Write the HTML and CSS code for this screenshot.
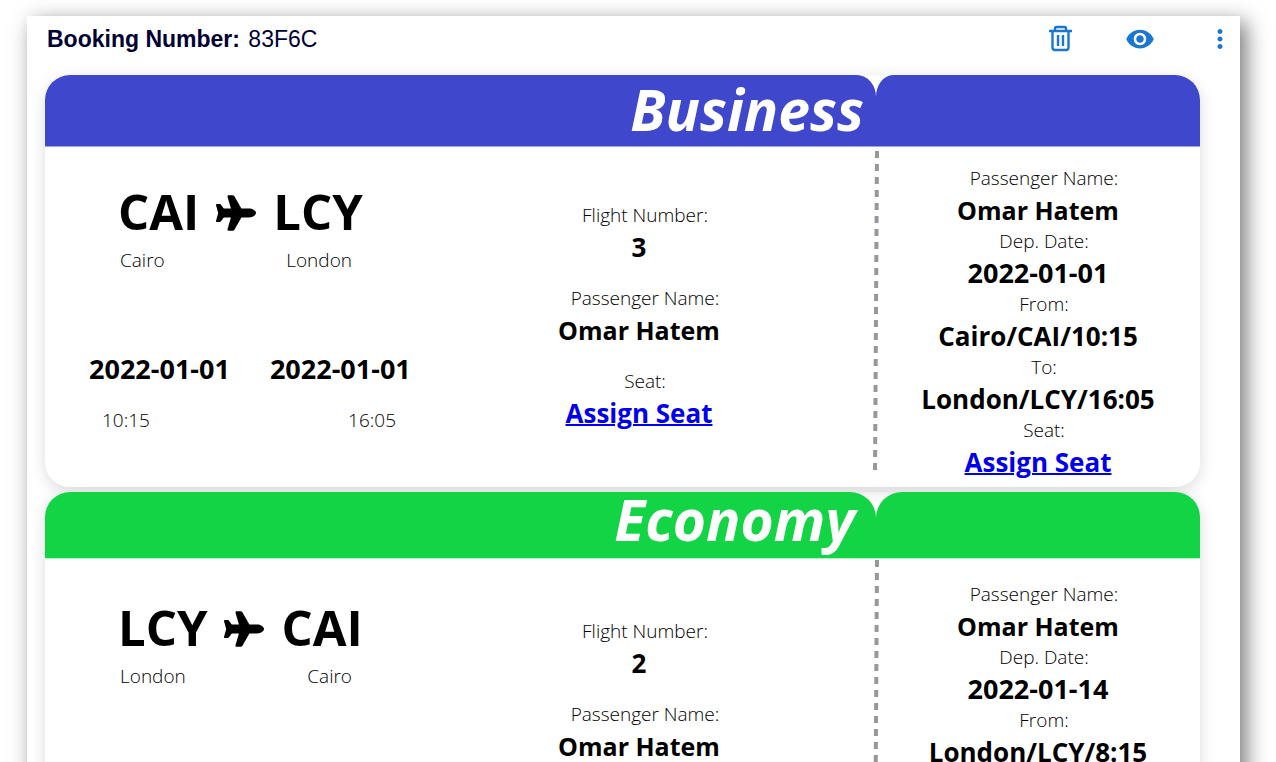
FILE: index.html
```html
<!DOCTYPE html>
<html lang="en">
<head>
<meta charset="utf-8">
<title>Booking 83F6C</title>
<link rel="stylesheet" href="styles.css">
</head>
<body>
<svg class="symbols" aria-hidden="true">
  <symbol id="plane" viewBox="0 0 576 512"><path d="M482.3 192c34.2 0 93.7 29 93.7 64c0 36-59.5 64-93.7 64l-116.6 0L265.2 495.9c-5.7 10-16.3 16.1-27.8 16.1l-56.2 0c-10.6 0-18.3-10.2-15.4-20.4l49-171.6L112 320 68.8 377.6c-3 4-7.8 6.4-12.8 6.4l-42 0c-7.8 0-14-6.3-14-14c0-1.3 .2-2.6 .5-3.9L32 256 .5 145.9c-.4-1.3-.5-2.6-.5-3.9c0-7.8 6.3-14 14-14l42 0c5 0 9.8 2.4 12.8 6.4L112 192l102.9 0-49-171.6C162.9 10.2 170.6 0 181.2 0l56.2 0c11.5 0 22.1 6.2 27.8 16.1L365.7 192l116.6 0z"/></symbol>
</svg>
<main class="booking">
  <header class="booking-bar">
    <h1 class="booking-title">Booking Number: <span class="booking-code">83F6C</span></h1>
    <div class="actions">
      <button class="action" type="button" aria-label="Delete booking">
        <svg class="icon" viewBox="0 0 30 30" fill="none" stroke="currentColor" stroke-width="2.400"><path d="M4 7h23M10 7V4.500Q10 3 11.500 3h8Q21 3 21 4.500V7M7.500 7v16.500q0 2.500 2.500 2.500h11q2.500 0 2.500-2.500V7M13 11v11M18 11v11"/></svg>
      </button>
      <button class="action" type="button" aria-label="View booking">
        <svg class="icon" viewBox="0 0 24 24" fill="currentColor"><path d="M12 4.500C7 4.500 2.730 7.610 1 12c1.730 4.390 6 7.500 11 7.500s9.270-3.110 11-7.500c-1.730-4.390-6-7.500-11-7.500zM12 17c-2.760 0-5-2.240-5-5s2.240-5 5-5 5 2.240 5 5-2.240 5-5 5zm0-8c-1.660 0-3 1.340-3 3s1.340 3 3 3 3-1.340 3-3-1.340-3-3-3z"/></svg>
      </button>
      <button class="action" type="button" aria-label="More options">
        <svg class="icon" viewBox="0 0 24 24" fill="currentColor"><path d="M12 8c1.100 0 2-.9 2-2s-.9-2-2-2-2 .9-2 2 .9 2 2 2zm0 2c-1.100 0-2 .9-2 2s.9 2 2 2 2-.9 2-2-.9-2-2-2zm0 6c-1.100 0-2 .9-2 2s.9 2 2 2 2-.9 2-2-.9-2-2-2z"/></svg>
      </button>
    </div>
  </header>

  <article class="ticket business">
    <div class="band">
      <h2 class="band-main">Business</h2>
      <div class="band-stub"></div>
    </div>
    <div class="ticket-body">
      <section class="journey">
        <div class="route"><span>CAI</span><svg class="plane"><use href="#plane"/></svg><span>LCY</span></div>
        <div class="cities"><span>Cairo</span><span>London</span></div>
        <div class="dates"><span>2022-01-01</span><span>2022-01-01</span></div>
        <div class="times"><span>10:15</span><span>16:05</span></div>
      </section>
      <dl class="details">
        <div class="pair"><dt>Flight Number:</dt><dd>3</dd></div>
        <div class="pair"><dt>Passenger Name:</dt><dd class="name">Omar Hatem</dd></div>
        <div class="pair"><dt>Seat:</dt><dd><a href="#">Assign Seat</a></dd></div>
      </dl>
      <svg class="tear" aria-hidden="true"><line x1="9" y1="4" x2="7" y2="96%"/></svg>
      <dl class="stub">
        <div class="pair"><dt>Passenger Name:</dt><dd class="name">Omar Hatem</dd></div>
        <div class="pair"><dt>Dep. Date:</dt><dd class="date">2022-01-01</dd></div>
        <div class="pair"><dt>From:</dt><dd>Cairo/CAI/10:15</dd></div>
        <div class="pair"><dt>To:</dt><dd>London/LCY/16:05</dd></div>
        <div class="pair"><dt>Seat:</dt><dd><a href="#">Assign Seat</a></dd></div>
      </dl>
    </div>
  </article>

  <article class="ticket economy">
    <div class="band">
      <h2 class="band-main">Economy</h2>
      <div class="band-stub"></div>
    </div>
    <div class="ticket-body">
      <section class="journey">
        <div class="route"><span>LCY</span><svg class="plane"><use href="#plane"/></svg><span>CAI</span></div>
        <div class="cities"><span>London</span><span>Cairo</span></div>
      </section>
      <dl class="details">
        <div class="pair"><dt>Flight Number:</dt><dd>2</dd></div>
        <div class="pair"><dt>Passenger Name:</dt><dd class="name">Omar Hatem</dd></div>
      </dl>
      <svg class="tear" aria-hidden="true"><line x1="9" y1="-3" x2="7" y2="97%"/></svg>
      <dl class="stub">
        <div class="pair"><dt>Passenger Name:</dt><dd class="name">Omar Hatem</dd></div>
        <div class="pair"><dt>Dep. Date:</dt><dd class="date">2022-01-14</dd></div>
        <div class="pair"><dt>From:</dt><dd>London/LCY/8:15</dd></div>
      </dl>
    </div>
  </article>
</main>
</body>
</html>
```
FILE: styles.css
```css
* { box-sizing: border-box; }
body { margin: 0; background: #fff; color: #000; font-family: "Segoe UI", "Open Sans", sans-serif; }
h1, h2, dl, dd { margin: 0; }
.symbols { display: none; }

.booking { margin: 16px 36px 16px 27px; padding: 0 40px 16px 18px; background: #fff; box-shadow: 6px 6px 20px #777; }
.booking-bar { display: flex; align-items: center; justify-content: space-between; height: 59px; padding-bottom: 14px; margin-right: -35px; }
.booking-title { padding-left: 2px; color: #000033; font: bold 23px/28px "Liberation Sans", Arial, sans-serif; }
.booking-code { padding-left: 2px; font-weight: 400; }
.actions { display: flex; gap: 50px; }
.action { display: flex; padding: 0; border: 0; background: none; color: #1976d2; cursor: pointer; }
.icon { width: 30px; height: 30px; }

.ticket { margin-bottom: 5px; border-radius: 25px; box-shadow: 0 4px 16px rgba(0, 0, 0, .14); }
.band, .ticket-body { display: grid; grid-template-columns: minmax(0, 831fr) minmax(0, 324fr); }
.band { height: 72px; color: #fff; }
.band-main { padding-right: 12px; text-align: right; font-size: 57px; font-style: italic; font-weight: 700; line-height: 68px; }
.business .band > * { background: #3f48cc; border-bottom: 1px solid #a0a5e6; }
.business .band-main { border-radius: 25px 19px 0 0 / 25px 22px 0 0; }
.business .band-stub { border-radius: 17px 25px 0 0 / 22px 25px 0 0; }
.economy .band { height: 67px; }
.economy .band > * { background: #12d445; border-bottom: 1px solid #b5f0c5; }
.economy .band-main { padding-right: 21px; border-radius: 25px 26px 0 0; line-height: 54px; }
.economy .band-stub { border-radius: 26px 25px 0 0; }

.ticket-body { grid-template-columns: minmax(0, 384fr) minmax(0, 420fr) minmax(0, 27fr) minmax(0, 324fr); height: 340px; background: #fff; border-radius: 0 0 25px 25px; }
.economy .ticket-body { padding-top: 4px; }
.journey { padding-top: 31px; font-size: 19px; font-weight: 300; line-height: 32px; }
.route { display: flex; align-items: center; gap: 17px; padding-left: 73px; font-size: 49px; font-weight: 700; line-height: 66px; }
.plane { width: 40px; height: 36px; margin-top: 4px; }
.cities { display: flex; justify-content: space-between; width: 232px; margin-left: 75px; }
.dates { display: flex; gap: 40px; margin: 77px 0 19px 44px; font-size: 27px; font-weight: 700; line-height: 32px; white-space: nowrap; }
.times { display: flex; justify-content: space-between; width: 294px; margin-left: 57px; }
.pair { text-align: center; }
.pair dt { padding-left: 12px; font-size: 19px; font-weight: 300; line-height: 31px; }
.pair dd { font-size: 26px; font-weight: 700; line-height: 32px; }
.pair .name { font-size: 25px; }
.pair .date { font-size: 27px; }
.pair a { color: #0000ee; text-decoration-thickness: 2px; }
.details { display: flex; flex-direction: column; gap: 20px; padding-top: 53px; }
.stub { padding-top: 16px; }
.tear { justify-self: end; width: 8px; height: 100%; overflow: visible; }
.tear line { stroke: #98989c; stroke-width: 4; stroke-dasharray: 7 6; }
```
